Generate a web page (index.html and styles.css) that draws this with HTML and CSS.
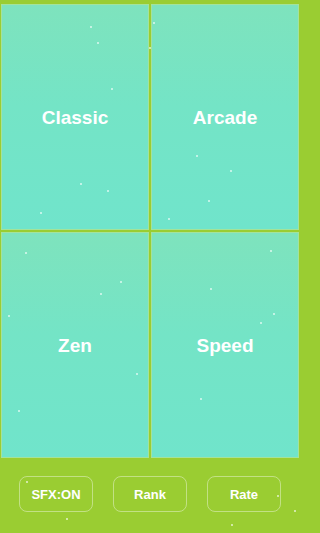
FILE: index.html
```html
<!DOCTYPE html>
<html>
<head>
<meta charset="utf-8">
<link rel="stylesheet" href="styles.css">
</head>
<body>
<div class="screen">
  <div class="grid">
    <div class="tile">Classic</div>
    <div class="tile">Arcade</div>
    <div class="tile">Zen</div>
    <div class="tile">Speed</div>
  </div>
  <div class="bar">
    <div class="btn">SFX:ON</div>
    <div class="btn">Rank</div>
    <div class="btn">Rate</div>
  </div>
  <span class="dot" style="left:90px;top:26px"></span>
  <span class="dot" style="left:97px;top:42px"></span>
  <span class="dot" style="left:153px;top:22px"></span>
  <span class="dot" style="left:149px;top:47px"></span>
  <span class="dot" style="left:111px;top:88px"></span>
  <span class="dot" style="left:80px;top:183px"></span>
  <span class="dot" style="left:107px;top:190px"></span>
  <span class="dot" style="left:40px;top:212px"></span>
  <span class="dot" style="left:196px;top:155px"></span>
  <span class="dot" style="left:230px;top:170px"></span>
  <span class="dot" style="left:168px;top:218px"></span>
  <span class="dot" style="left:208px;top:200px"></span>
  <span class="dot" style="left:270px;top:250px"></span>
  <span class="dot" style="left:25px;top:252px"></span>
  <span class="dot" style="left:210px;top:288px"></span>
  <span class="dot" style="left:100px;top:293px"></span>
  <span class="dot" style="left:120px;top:281px"></span>
  <span class="dot" style="left:8px;top:315px"></span>
  <span class="dot" style="left:260px;top:322px"></span>
  <span class="dot" style="left:273px;top:313px"></span>
  <span class="dot" style="left:136px;top:373px"></span>
  <span class="dot" style="left:18px;top:410px"></span>
  <span class="dot" style="left:200px;top:398px"></span>
  <span class="dot" style="left:26px;top:481px"></span>
  <span class="dot" style="left:66px;top:518px"></span>
  <span class="dot" style="left:231px;top:524px"></span>
  <span class="dot" style="left:277px;top:495px"></span>
  <span class="dot" style="left:294px;top:510px"></span>
</div>
</body>
</html>
```
FILE: styles.css
```css
html, body {
  margin: 0;
  padding: 0;
}
body {
  background: #9acd32;
  font-family: "Liberation Sans", Arial, sans-serif;
}
.screen {
  position: relative;
  width: 300px;
  height: 533px;
  overflow: hidden;
  background: #9acd32;
}
.grid {
  display: grid;
  grid-template-columns: 148px 148px;
  grid-template-rows: 226px 226px;
  gap: 2px;
  padding: 4px 1px 0 1px;
}
.tile {
  box-sizing: border-box;
  display: flex;
  align-items: center;
  justify-content: center;
  background: linear-gradient(180deg, #7ee3bd 0%, #74e4c6 45%, #70e4cb 100%);
  border: 1px solid #a4e39a;
  color: #ffffff;
  font-weight: bold;
  font-size: 19px;
  padding-top: 1px;
}
.bar {
  display: flex;
  justify-content: center;
  gap: 20px;
  padding-top: 18px;
}
.btn {
  box-sizing: border-box;
  width: 74px;
  height: 36px;
  border: 1px solid rgba(255, 255, 255, 0.4);
  border-radius: 8px;
  display: flex;
  align-items: center;
  justify-content: center;
  color: #ffffff;
  font-weight: bold;
  font-size: 13px;
}
.dot {
  position: absolute;
  width: 2px;
  height: 2px;
  border-radius: 1px;
  background: rgba(255, 255, 255, 0.75);
}
```
